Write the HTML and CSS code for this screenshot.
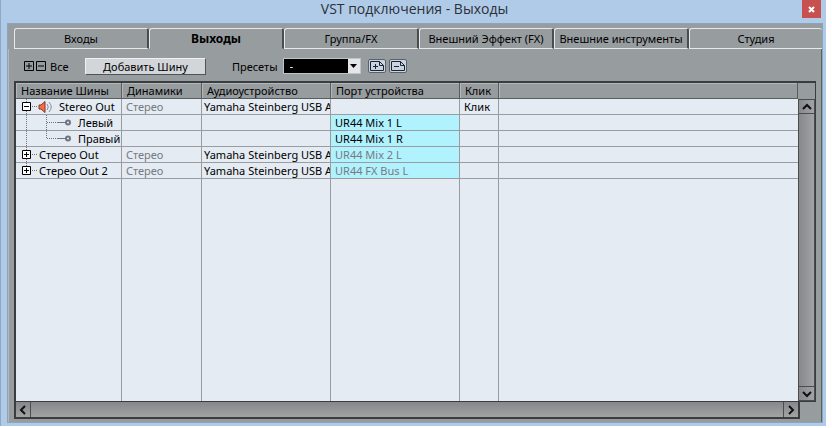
FILE: index.html
```html
<!DOCTYPE html>
<html lang="ru">
<head>
    <meta charset="UTF-8">
    <meta name="viewport" content="width=device-width, initial-scale=1.0">
    <title>VST подключения - Выходы</title>
    <link rel="stylesheet" href="styles.css">
</head>
<body>

<div class="window">
    <header class="titlebar">
        <h1>VST подключения - Выходы</h1>
        <button class="close" type="button" aria-label="Закрыть">
            <svg width="7" height="7" viewBox="0 0 7 7"><path d="M1 1l5 5M6 1L1 6" stroke="#fff" stroke-width="2"/></svg>
        </button>
    </header>

    <main class="panel">
        <!-- Tabs -->
        <nav class="tabs">
            <button type="button">Входы</button>
            <button type="button" class="active">Выходы</button>
            <button type="button">Группа/FX</button>
            <button type="button">Внешний Эффект (FX)</button>
            <button type="button">Внешние инструменты</button>
            <button type="button">Студия</button>
        </nav>

        <div class="content">
            <!-- Toolbar -->
            <div class="toolbar">
                <div class="all">
                    <button type="button" class="toggle-all" aria-label="Развернуть все"><svg width="10" height="10" viewBox="0 0 10 10"><path d="M.5.5h9v9h-9zM2 5h6M5 2v6"/></svg></button>
                    <button type="button" class="toggle-all" aria-label="Свернуть все"><svg width="10" height="10" viewBox="0 0 10 10"><path d="M.5.5h9v9h-9zM2 5h6"/></svg></button>
                    <span>Все</span>
                </div>
                <button type="button" class="add-bus">Добавить Шину</button>
                <label for="presets">Пресеты</label>
                <div class="preset">
                    <select id="presets"><option>-</option></select>
                    <span class="arrow"><svg width="7" height="4" viewBox="0 0 7 4"><path d="M0 0h7L3.500 4z" fill="#000"/></svg></span>
                </div>
                <div class="preset-buttons">
                    <button type="button" aria-label="Сохранить пресет"><svg width="14" height="10" viewBox="0 0 14 10"><path d="M.5.5h9l4 4v5H.5zM9.500.5v4h4M3 5.500h5M5.500 3v5"/></svg></button>
                    <button type="button" aria-label="Удалить пресет"><svg width="14" height="10" viewBox="0 0 14 10"><path d="M.5.5h9l4 4v5H.5zM9.500.5v4h4M3 5.500h5"/></svg></button>
                </div>
            </div>

            <!-- Bus list -->
            <div class="list">
                <table>
                    <colgroup>
                        <col class="c-name"><col class="c-speakers"><col class="c-device"><col class="c-port"><col class="c-click"><col>
                    </colgroup>
                    <thead>
                        <tr><th>Название Шины</th><th>Динамики</th><th>Аудиоустройство</th><th>Порт устройства</th><th>Клик</th><th></th></tr>
                    </thead>
                    <tbody>
                        <tr>
                            <td class="tree"><div>
                                <button type="button" class="toggle" aria-label="Свернуть"><svg width="9" height="15" viewBox="0 0 9 15"><path class="guide" d="M4.500 0v15"/><path d="M.5 3.500h8v8h-8zM2 7.500h5"/></svg></button>
                                <svg class="dots" width="7" height="15" viewBox="0 0 7 15"><path d="M1 7.500h6"/></svg>
                                <svg class="speaker" width="16" height="12" viewBox="0 0 16 12">
                                    <path d="M1 4h2l4-3.500v11L3 8H1z" fill="#ff6a42" stroke="#7a3a2c"/>
                                    <path d="M9 3q2.500 3 0 6M11 1q4.500 5 0 10" fill="none" stroke="#8a8e92"/>
                                </svg>
                                <span>Stereo Out</span>
                            </div></td>
                            <td class="dim">Стерео</td><td>Yamaha Steinberg USB A</td><td></td><td>Клик</td><td></td>
                        </tr>
                        <tr>
                            <td class="tree child"><div>
                                <svg class="dots" width="58" height="15" viewBox="0 0 58 15"><path d="M10.500 0v15M30.500 0v15M31 7.500h11"/><path class="jack" d="M42 7.500h8"/><circle class="jack ring" cx="52" cy="7.500" r="2"/></svg>
                                <span>Левый</span>
                            </div></td>
                            <td></td><td></td><td class="port">UR44 Mix 1 L</td><td></td><td></td>
                        </tr>
                        <tr>
                            <td class="tree child"><div>
                                <svg class="dots" width="58" height="15" viewBox="0 0 58 15"><path d="M10.500 0v15M30.500 0v8M31 7.500h11"/><path class="jack" d="M42 7.500h8"/><circle class="jack ring" cx="52" cy="7.500" r="2"/></svg>
                                <span>Правый</span>
                            </div></td>
                            <td></td><td></td><td class="port">UR44 Mix 1 R</td><td></td><td></td>
                        </tr>
                        <tr>
                            <td class="tree"><div>
                                <button type="button" class="toggle" aria-label="Развернуть"><svg width="9" height="15" viewBox="0 0 9 15"><path class="guide" d="M4.500 0v15"/><path d="M.5 3.500h8v8h-8zM2 7.500h5M4.500 5v5"/></svg></button>
                                <svg class="dots" width="7" height="15" viewBox="0 0 7 15"><path d="M1 7.500h6"/></svg>
                                <span>Стерео Out</span>
                            </div></td>
                            <td class="dim">Стерео</td><td>Yamaha Steinberg USB A</td><td class="port dim">UR44 Mix 2 L</td><td></td><td></td>
                        </tr>
                        <tr>
                            <td class="tree"><div>
                                <button type="button" class="toggle" aria-label="Развернуть"><svg width="9" height="15" viewBox="0 0 9 15"><path class="guide" d="M4.500 0v7"/><path d="M.5 3.500h8v8h-8zM2 7.500h5M4.500 5v5"/></svg></button>
                                <svg class="dots" width="7" height="15" viewBox="0 0 7 15"><path d="M1 7.500h6"/></svg>
                                <span>Стерео Out 2</span>
                            </div></td>
                            <td class="dim">Стерео</td><td>Yamaha Steinberg USB A</td><td class="port dim">UR44 FX Bus L</td><td></td><td></td>
                        </tr>
                        <tr class="filler"><td></td><td></td><td></td><td></td><td></td><td></td></tr>
                    </tbody>
                </table>
                <div class="vscroll">
                    <button type="button" aria-label="Вверх"><svg width="10" height="10" viewBox="0 0 10 10"><path d="M1 7l4-4 4 4"/></svg></button>
                    <button type="button" aria-label="Вниз"><svg width="10" height="10" viewBox="0 0 10 10"><path d="M1 3l4 4 4-4"/></svg></button>
                </div>
            </div>
            <div class="hscroll">
                <button type="button" aria-label="Влево"><svg width="10" height="10" viewBox="0 0 10 10"><path d="M7 1L3 5l4 4"/></svg></button>
                <button type="button" aria-label="Вправо"><svg width="10" height="10" viewBox="0 0 10 10"><path d="M3 1l4 4-4 4"/></svg></button>
            </div>
        </div>
    </main>
</div>

</body>
</html>
```

FILE: styles.css
```css
* {
    margin: 0;
    padding: 0;
    box-sizing: border-box;
}

body {
    display: flex;
    min-height: 100vh;
    padding: 0 6px 2px 0;
    background: #fff;
    color: #000;
    font-family: "Noto Sans", "Open Sans", sans-serif;
    font-size: 11px;
}

button, select {
    font: inherit;
    color: inherit;
    border: 0;
    background: none;
}

svg {
    display: block;
    flex: none;
}

.window {
    flex: 1;
    min-width: 0;
    display: flex;
    flex-direction: column;
    padding: 0 3px 3px 6px;
    background: #b0cbe8;
    border-left: 1px solid #8fa6c4;
}

/* Title bar */
.titlebar {
    display: flex;
    height: 23px;
}

.titlebar h1 {
    flex: 1;
    padding-left: 20px;
    text-align: center;
    font: 400 14px/18px "Open Sans", sans-serif;
    color: #2c3038;
}

.close {
    display: flex;
    align-items: center;
    justify-content: center;
    width: 19px;
    height: 18px;
    margin-right: 2px;
    background: #c75050;
}

/* Panel */
.panel {
    flex: 1;
    display: flex;
    flex-direction: column;
    padding-top: 4px;
    background: #979c9f;
    border: 1px solid #8ba3bd;
}

.tabs {
    display: grid;
    grid-template-columns: repeat(5, 135px) 1fr;
    margin-left: 6px;
}

.tabs button {
    height: 21px;
    line-height: 19px;
    white-space: nowrap;
    border: 1px solid #e6e8ea;
    border-right: 2px solid #4a4d4f;
    border-radius: 3px 3px 0 0;
}

.tabs button:last-child {
    border-right: 0;
}

.tabs .active {
    font-size: 12px;
    font-weight: bold;
    border-bottom-color: transparent;
}

.content {
    flex: 1;
    display: flex;
    flex-direction: column;
    padding: 0 5px 3px 5px;
    border-left: 1px solid #b4b8ba;
    border-right: 1px solid #5c6063;
}

.toolbar {
    display: flex;
    align-items: center;
    height: 32px;
    padding: 2px 0 0 10px;
}

.all {
    display: flex;
    align-items: center;
    gap: 2px;
    width: 61px;
}

.all span {
    padding-left: 2px;
}

.toggle svg {
    fill: #fff;
    stroke: #000;
}

.toggle .guide {
    stroke: #70757a;
    stroke-dasharray: 1 1;
}

.toggle-all svg {
    fill: none;
    stroke: #000;
}

.add-bus {
    width: 121px;
    height: 17px;
    margin-right: 26px;
    line-height: 15px;
    background: #d2d5da;
    border: 1px solid #eef0f2;
    border-right-color: #505355;
    border-bottom-color: #505355;
}

.preset {
    display: flex;
    width: 78px;
    height: 16px;
    margin: 0 7px 0 5px;
    background: #000;
    border: 1px solid #c0c4c6;
}

.preset select {
    flex: 1;
    min-width: 0;
    padding-left: 6px;
    appearance: none;
    color: #fff;
    line-height: 14px;
}

.arrow {
    display: flex;
    align-items: center;
    justify-content: center;
    width: 12px;
    background: #e4e6e8;
}

.preset-buttons {
    display: flex;
    gap: 3px;
}

.preset-buttons button {
    display: flex;
    align-items: center;
    justify-content: center;
    width: 18px;
    height: 14px;
    background: #c9d3e2;
    border: 1px solid #5d6268;
    border-radius: 2px;
}

.preset-buttons svg {
    fill: none;
    stroke: #1c2430;
}

/* Bus list */
.list {
    flex: 1;
    display: grid;
    grid-template-columns: 1fr 17px;
    border: 1px solid #3a3d3f;
    border-top-width: 2px;
    border-left-width: 2px;
}

table {
    width: 100%;
    height: 100%;
    table-layout: fixed;
    border-spacing: 0;
    background: #e4ebf3;
}

.c-name { width: 106px; }
.c-speakers { width: 80px; }
.c-device { width: 129px; }
.c-port { width: 129px; }
.c-click { width: 39px; }

th, td {
    height: 16px;
    padding-left: 4px;
    line-height: 15px;
    text-align: left;
    white-space: nowrap;
    overflow: hidden;
    border-right: 1px solid #9a9c9f;
    border-bottom: 1px solid #9a9c9f;
}

th {
    padding-left: 5px;
    font-weight: normal;
    background: #979c9f;
    border-right-color: #5a5d60;
    border-bottom-color: #5a5d60;
    box-shadow: inset 1px 1px #b4b8ba;
}

td:nth-child(3) {
    padding-left: 2px;
}

td:last-child {
    border-right: 0;
}

.tree {
    padding-left: 6px;
}

.tree.child {
    padding-left: 0;
}

.tree div {
    display: flex;
    align-items: center;
    height: 15px;
}

.tree span {
    padding-left: 1px;
}

.child span {
    padding-left: 4px;
}

.speaker + span {
    padding-left: 5px;
}

.dots {
    fill: none;
    stroke: #70757a;
    stroke-dasharray: 1 1;
}

.jack {
    stroke: #6c7782;
    stroke-dasharray: none;
}

.ring {
    stroke-width: 2;
}

.dim {
    color: #777b80;
}

.port {
    background: #b0f2fe;
}

.filler td {
    height: 100%;
    border-bottom: 0;
}

/* Scrollbars */
.vscroll, .hscroll {
    display: flex;
    justify-content: space-between;
}

.vscroll {
    flex-direction: column;
    margin-top: 16px;
    border: 1px solid #4a4c4e;
    background: linear-gradient(to right, #878889, #a2a3a4);
}

.hscroll {
    height: 17px;
    margin-right: 16px;
    border: 1px solid #3a3d3f;
    border-width: 0 2px 2px 2px;
    background: linear-gradient(#868788, #a2a3a4);
}

.vscroll button, .hscroll button {
    display: flex;
    align-items: center;
    justify-content: center;
}

.vscroll button {
    height: 14px;
    border-bottom: 1px solid #4a4c4e;
}

.vscroll button:last-child {
    border-top: 1px solid #4a4c4e;
    border-bottom: 0;
}

.hscroll button {
    width: 15px;
    border-right: 1px solid #4a4c4e;
}

.hscroll button:last-child {
    border-left: 1px solid #4a4c4e;
    border-right: 0;
}

.vscroll svg, .hscroll svg {
    fill: none;
    stroke: #101112;
    stroke-width: 2;
}
```
